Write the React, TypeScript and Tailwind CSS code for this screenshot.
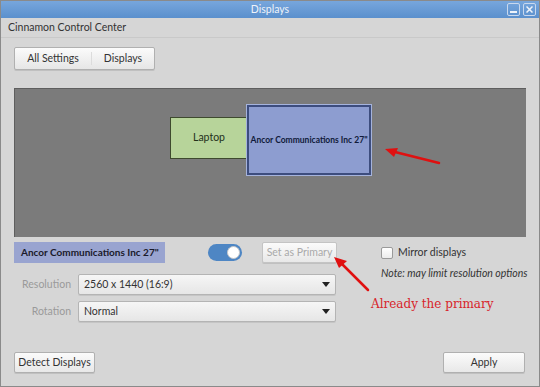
import React from "react";

const Caret = () => (
  <svg width="8" height="5" viewBox="0 0 8 5" className="ml-auto">
    <path d="M0 0h8L4 5z" fill="#222" />
  </svg>
);

const Dropdown = ({ value }: { value: string }) => (
  <div className="flex h-[21px] w-[258px] items-center rounded-[2px] border border-[#b4b4b4] bg-gradient-to-b from-[#f6f6f6] to-[#e6e6e6] pl-[5px] pr-[5px] text-[10.5px] text-[#333] shadow-[0_1px_0_rgba(0,0,0,0.08)]">
    {value}
    <Caret />
  </div>
);

const Btn = ({ children, className = "" }: { children: React.ReactNode; className?: string }) => (
  <div
    className={`flex h-[21px] items-center justify-center whitespace-nowrap rounded-[2px] border border-[#b0b0b0] bg-gradient-to-b from-[#fbfbfb] to-[#e8e8e8] text-[10.5px] text-[#333] shadow-[0_1px_0_rgba(0,0,0,0.1)] ${className}`}
  >
    {children}
  </div>
);

const App = () => {
  return (
    <div
      className="relative flex h-[387px] w-[540px] flex-col overflow-hidden border border-[#8a8a8a] bg-[#d6d6d6]"
      style={{ fontFamily: 'Lato, "Liberation Sans", sans-serif' }}
    >
      {/* title bar */}
      <div className="relative flex h-[17px] items-center justify-center bg-gradient-to-b from-[#77a6dc] to-[#5b90cd] text-[10.5px] text-[#eef3fa]">
        Displays
        <div className="absolute right-[3px] top-[2px] flex gap-[3px]">
          <div className="flex h-[13px] w-[13px] items-end justify-center rounded-[2px] border border-[#c8d8ee] pb-[2px]">
            <div className="h-[2px] w-[7px] bg-[#eef3fa]" />
          </div>
          <div className="flex h-[13px] w-[13px] items-center justify-center rounded-[2px] border border-[#c8d8ee]">
            <svg width="7" height="7" viewBox="0 0 7 7">
              <path d="M0.5 0.5l6 6M6.5 0.5l-6 6" stroke="#eef3fa" strokeWidth="1.5" />
            </svg>
          </div>
        </div>
      </div>

      {/* header */}
      <div className="flex h-[20px] items-center border-b border-[#c9c9c9] pl-[7px] pt-[1px] text-[10.5px] text-[#333]">
        Cinnamon Control Center
      </div>

      <div className="flex flex-1 flex-col px-[13px]">
        {/* breadcrumbs */}
        <div className="mt-[9px] flex h-[23px] w-[141px] items-center rounded-[2px] border border-[#b0b0b0] bg-gradient-to-b from-[#fbfbfb] to-[#e6e6e6] text-[10.5px] text-[#333] shadow-[0_1px_0_rgba(0,0,0,0.1)]">
          <div className="flex h-full w-[76px] items-center justify-center">All Settings</div>
          <div className="h-[13px] w-px bg-[#dcdcdc]" />
          <div className="flex flex-1 items-center justify-center">Displays</div>
        </div>

        {/* arrangement area */}
        <div className="relative mt-[18px] h-[149px] w-[512px] border-l border-t border-[#5e5e5e] bg-[#7b7b7b]">
          <div className="absolute left-[155px] top-[28px] flex h-[42px] w-[78px] items-center justify-center border border-[#3e4a2e] bg-[#b7d49a] text-[10.5px] text-[#24301a]">
            Laptop
          </div>
          <div className="absolute left-[232px] top-[16px] flex h-[70px] w-[124px] items-center justify-center whitespace-nowrap border-2 border-[#3d4d7e] bg-[#8d9dd0] text-[8.5px] font-bold text-[#101a3a] shadow-[0_0_0_1px_#a5b3dc]">
            Ancor Communications Inc 27"
          </div>
          <svg className="absolute left-[368px] top-[54px]" width="60" height="22" viewBox="0 0 60 22">
            <path d="M56 20L8 8" stroke="#e01010" strokeWidth="2.5" strokeLinecap="round" />
            <path d="M2 6L15 5L11 14z" fill="#e01010" />
          </svg>
        </div>

        {/* controls */}
        <div className="relative mt-[5px] flex">
          <div className="flex flex-col">
            <div className="flex items-center">
              <div className="flex h-[21px] w-[151px] items-center whitespace-nowrap bg-[#99a4d0] pl-[7px] text-[10px] font-bold text-[#1a1a2a]">
                Ancor Communications Inc 27"
              </div>
              <div className="ml-[43px] flex h-[17px] w-[34px] items-center justify-end rounded-full bg-[#4e86c4] pr-[2px]">
                <div className="h-[13px] w-[13px] rounded-full border border-[#c8c8c8] bg-white" />
              </div>
              <Btn className="ml-[20px] w-[75px] !border-[#c4c4c4] !text-[#a9a9a9]">Set as Primary</Btn>
            </div>
            <div className="mt-[11px] flex items-center">
              <div className="w-[57px] text-right text-[10.5px] text-[#9a9a9a]">Resolution</div>
              <div className="ml-[7px]">
                <Dropdown value="2560 x 1440 (16:9)" />
              </div>
            </div>
            <div className="mt-[6px] flex items-center">
              <div className="w-[57px] text-right text-[10.5px] text-[#9a9a9a]">Rotation</div>
              <div className="ml-[7px]">
                <Dropdown value="Normal" />
              </div>
            </div>
          </div>
          <div className="ml-[44px] mt-[3px] flex flex-col">
            <div className="flex items-center text-[10.5px] text-[#333]">
              <div className="h-[12px] w-[12px] rounded-[2px] border border-[#9a9a9a] bg-gradient-to-b from-white to-[#ececec]" />
              <span className="ml-[5px]">Mirror displays</span>
            </div>
            <div className="mt-[5px] whitespace-nowrap text-[10.5px] italic text-[#333]">Note: may limit resolution options</div>
          </div>
          <svg className="absolute left-[318px] top-[14px]" width="40" height="36" viewBox="0 0 40 36">
            <path d="M36 34L8 6" stroke="#e01010" strokeWidth="2.5" strokeLinecap="round" />
            <path d="M2 1L15 5L7 12z" fill="#e01010" />
          </svg>
          <div
            className="absolute left-[357px] top-[53px] text-[12px] text-[#d8242a]"
            style={{ fontFamily: '"DejaVu Serif", serif' }}
          >
            Already the primary
          </div>
        </div>

        {/* footer */}
        <div className="mb-[13px] mt-auto flex justify-between">
          <Btn className="w-[81px]">Detect Displays</Btn>
          <Btn className="mr-[1px] w-[82px]">Apply</Btn>
        </div>
      </div>
    </div>
  );
};

export default App;
